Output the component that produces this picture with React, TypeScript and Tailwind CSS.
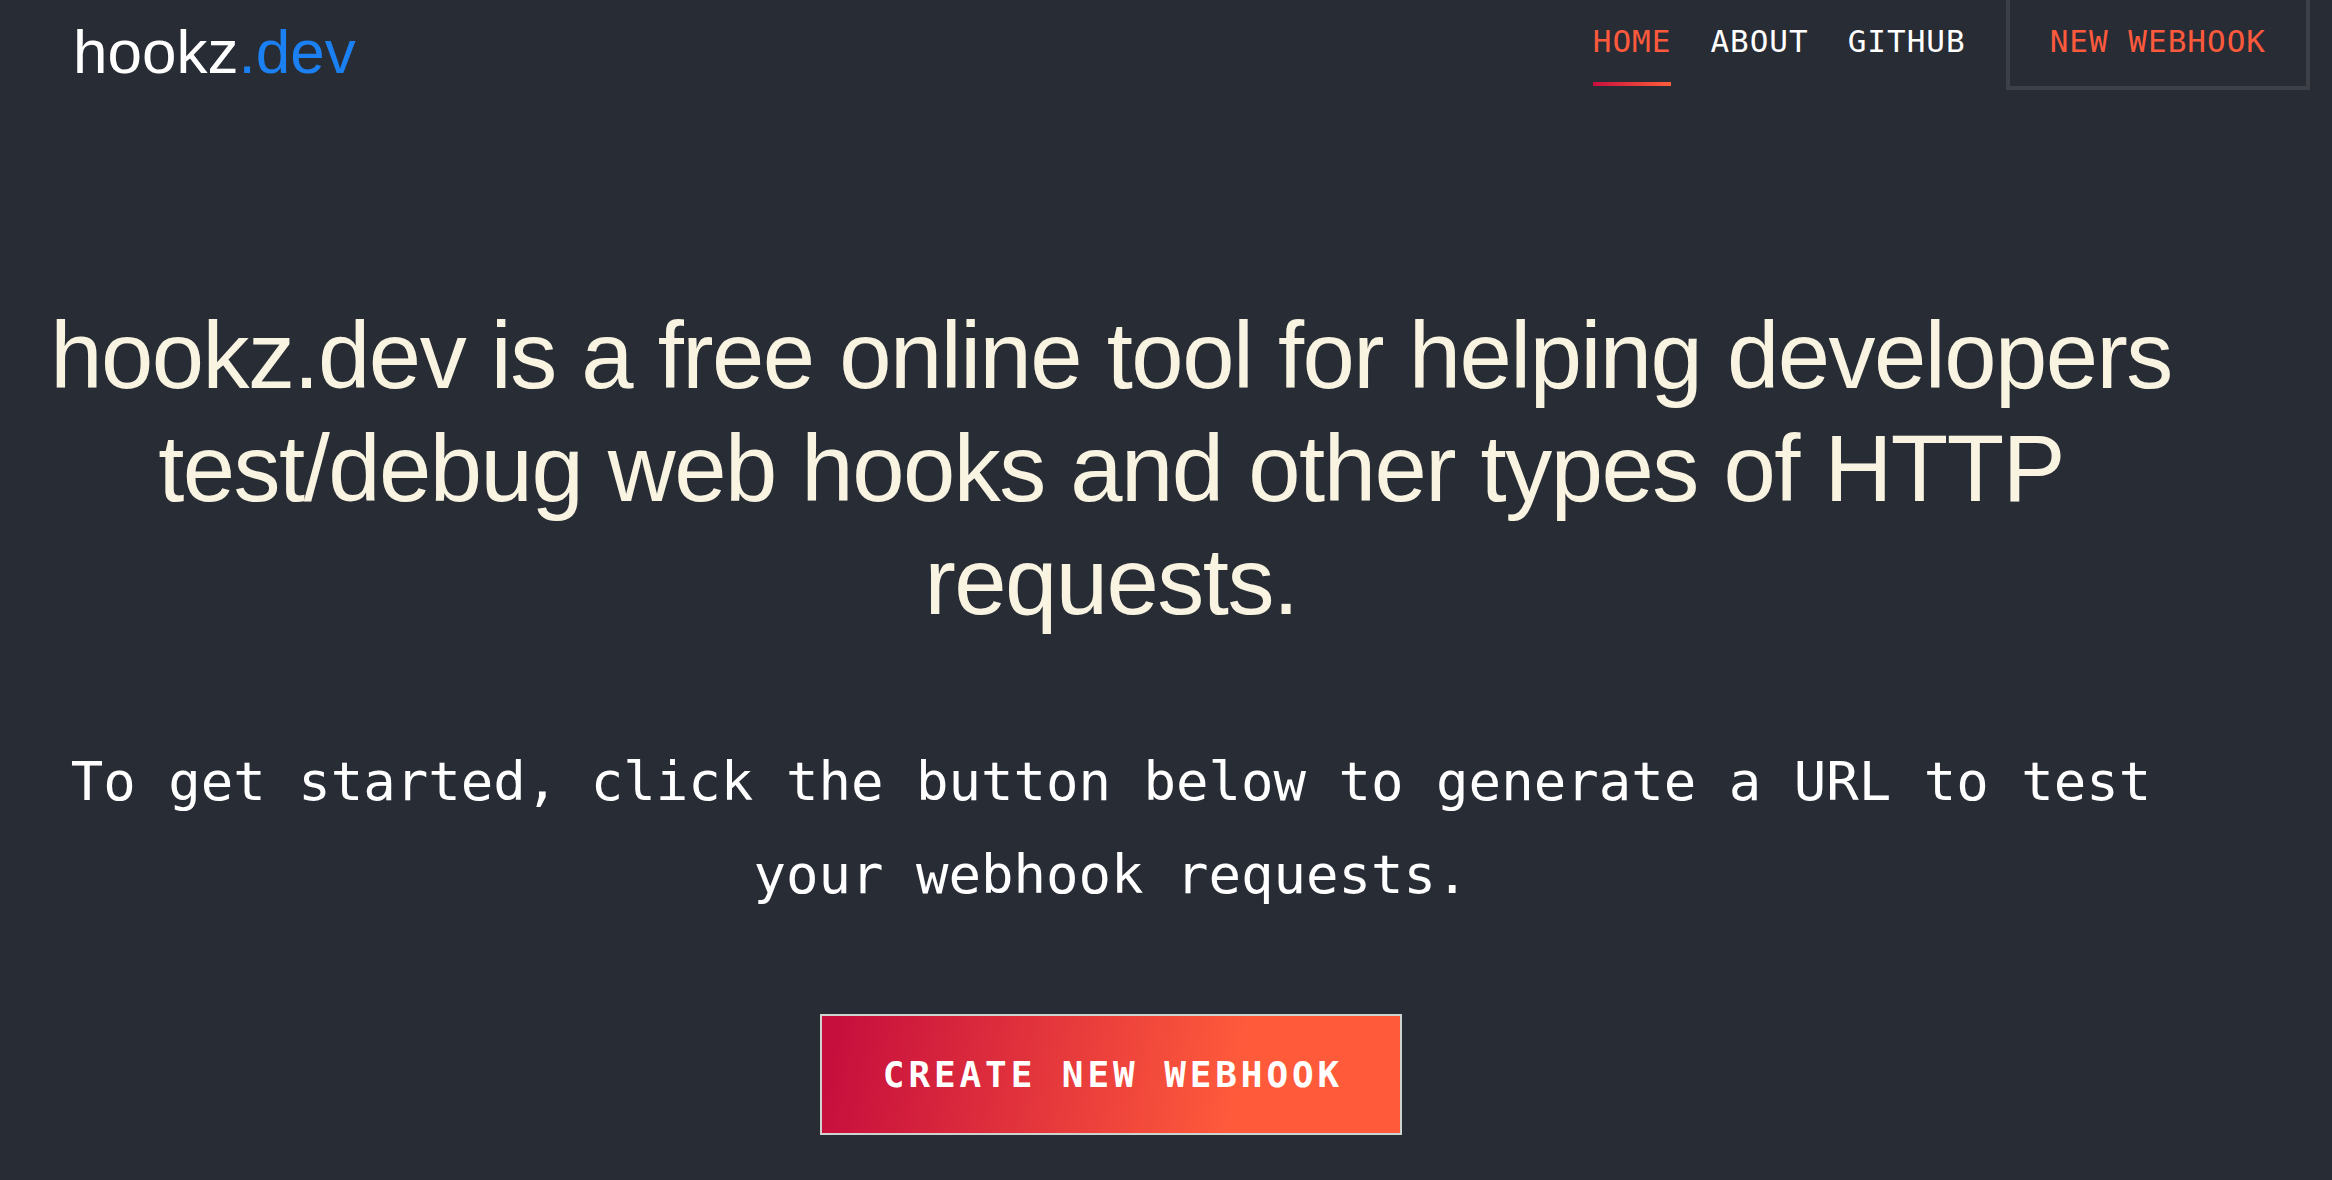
import React from "react";

export default function App() {
  const mono = { fontFamily: '"DejaVu Sans Mono", "Liberation Mono", monospace' };
  const sans = { fontFamily: '"Liberation Sans", Arial, sans-serif' };
  return (
    <div className="min-h-screen w-full bg-[#282c35] overflow-hidden">
      <header className="flex items-start justify-between h-[90px]">
        <div
          className="pl-[73px] pt-[21px] text-[62px] leading-[62px] text-white"
          style={sans}
        >
          hookz<span className="text-[#1b80f2]">.dev</span>
        </div>
        <nav className="flex items-start gap-[39px] pr-[22px]" style={mono}>
          <a className="flex flex-col pt-[26px] text-[31px] leading-[31px] tracking-[1px] text-[#fd5a3d]">
            HOME
            <span className="mt-[25px] h-[4px] w-full bg-[linear-gradient(to_right,#c8103e,#ff5e3a)]" />
          </a>
          <a className="pt-[26px] text-[31px] leading-[31px] tracking-[1px] text-white">ABOUT</a>
          <a className="pt-[26px] text-[31px] leading-[31px] tracking-[1px] text-white">GITHUB</a>
          <a className="ml-[1px] h-[90px] border-x-4 border-b-4 border-[#3d4047] px-[40px] pt-[26px] text-[31px] leading-[31px] tracking-[1px] text-[#fd5a3d]">
            NEW WEBHOOK
          </a>
        </nav>
      </header>

      <main className="w-[2222px] flex flex-col items-center text-center">
        <h1
          className="mt-[209px] text-[94px] leading-[113px] tracking-[-1.5px] [word-spacing:1px] text-[#f9f4e1] font-normal"
          style={sans}
        >
          hookz.dev is a free online tool for helping developers test/debug web hooks and other types of HTTP requests.
        </h1>
        <p
          className="mt-[97px] text-[54px] leading-[93px] text-white"
          style={mono}
        >
          To get started, click the button below to generate a URL to test your webhook requests.
        </p>
        <button
          className="mt-[93px] mb-[30px] flex h-[121px] w-[582px] items-center justify-center border-2 border-[#cfd3d0] bg-[linear-gradient(100deg,#c70f3d_3%,#ff5b3b_72%)] pl-[4px] text-[36px] font-bold tracking-[3.9px] text-white"
          style={mono}
        >
          CREATE NEW WEBHOOK
        </button>
      </main>
    </div>
  );
}
